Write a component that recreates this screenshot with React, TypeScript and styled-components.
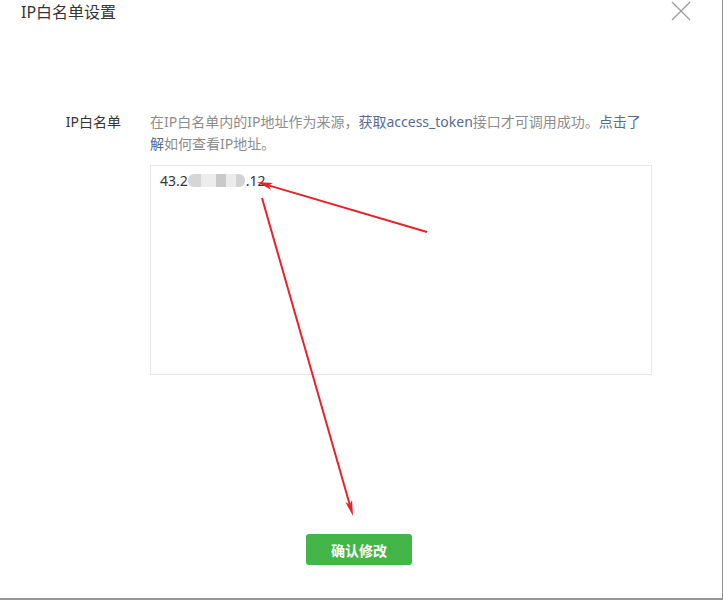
import React from 'react';
import styled, { createGlobalStyle } from 'styled-components';

const GlobalStyle = createGlobalStyle`
  html, body {
    margin: 0;
    padding: 0;
    background: #fff;
  }
  body {
    font-family: "Noto Sans", "Noto Sans CJK SC", sans-serif;
  }
`;

const Dialog = styled.div`
  position: relative;
  box-sizing: border-box;
  width: 723px;
  height: 600px;
  background: #fff;
  border-right: 1px solid #8f8f8f;
  border-bottom: 2px solid #959595;
  display: flex;
  flex-direction: column;
`;

const Header = styled.div`
  display: flex;
  align-items: center;
  justify-content: space-between;
  height: 24px;
  padding: 0 31px 0 21px;
`;

const Title = styled.h3`
  margin: 0;
  font-size: 16px;
  font-weight: normal;
  line-height: 24px;
  color: #353535;
`;

const CloseButton = styled.button`
  border: 0;
  background: none;
  padding: 0;
  width: 20px;
  height: 20px;
  margin-top: -2px;
  cursor: pointer;
  display: flex;
`;

const Body = styled.div`
  padding-top: 87px;
`;

const FormRow = styled.div`
  display: flex;
  align-items: flex-start;
`;

const Label = styled.label`
  width: 121px;
  margin-right: 29px;
  text-align: right;
  font-size: 14px;
  line-height: 22px;
  color: #353535;
  flex-shrink: 0;
`;

const Field = styled.div`
  width: 502px;
`;

const Hint = styled.p`
  margin: 0;
  font-size: 14px;
  line-height: 22px;
  color: #8d8d8d;
  white-space: nowrap;
`;

const Link = styled.a`
  color: #576b95;
  text-decoration: none;
`;

const IpBox = styled.div`
  box-sizing: border-box;
  margin-top: 10px;
  width: 502px;
  height: 210px;
  border: 1px solid #e7e7e7;
  padding: 5px 9px;
  font-size: 14px;
  line-height: 20px;
  color: #353535;
`;

// blurred part of the address
const Mosaic = styled.span`
  display: inline-flex;
  vertical-align: -1px;
  height: 13px;
  margin: 0 1px 0 0;
  filter: blur(0.6px);
`;

const Tile = styled.span<{ $w: number; $c: string; $radius?: string }>`
  display: inline-block;
  width: ${p => p.$w}px;
  height: 13px;
  background: ${p => p.$c};
  border-radius: ${p => p.$radius || '0'};
`;

const Footer = styled.div`
  display: flex;
  justify-content: center;
  padding-right: 4px;
  margin-top: 159px;
`;

const PrimaryButton = styled.button`
  width: 106px;
  height: 31px;
  border: 0;
  border-radius: 3px;
  background: #44b549;
  color: #fff;
  font-family: "Noto Sans CJK SC", sans-serif;
  font-size: 14px;
  font-weight: bold;
  cursor: pointer;
`;

const Annotations = styled.svg`
  position: absolute;
  left: 0;
  top: 0;
  pointer-events: none;
`;

const Arrow = ({ x1, y1, x2, y2 }: { x1: number; y1: number; x2: number; y2: number }) => {
  const angle = Math.atan2(y2 - y1, x2 - x1);
  const len = 16;
  const spread = 0.22;
  const ax = x2 - len * Math.cos(angle - spread);
  const ay = y2 - len * Math.sin(angle - spread);
  const bx = x2 - len * Math.cos(angle + spread);
  const by = y2 - len * Math.sin(angle + spread);
  const mx = x2 - (len - 4) * Math.cos(angle);
  const my = y2 - (len - 4) * Math.sin(angle);
  return (
    <g>
      <line x1={x1} y1={y1} x2={mx} y2={my} stroke="#e8222a" strokeWidth={2} />
      <polygon points={`${x2},${y2} ${ax},${ay} ${mx},${my} ${bx},${by}`} fill="#e8222a" />
    </g>
  );
};

export default function App() {
  return (
    <>
      <GlobalStyle />
      <Dialog>
        <Header>
          <Title>IP白名单设置</Title>
          <CloseButton aria-label="关闭">
            <svg width="20" height="20" viewBox="0 0 20 20">
              <path d="M1 1L19 19M19 1L1 19" stroke="#9a9a9a" strokeWidth="1.2" fill="none" />
            </svg>
          </CloseButton>
        </Header>
        <Body>
          <FormRow>
            <Label>IP白名单</Label>
            <Field>
              <Hint>
                在IP白名单内的IP地址作为来源，<Link href="#">获取access_token</Link>接口才可调用成功。<Link href="#">点击了</Link>
                <br />
                <Link href="#">解</Link>如何查看IP地址。
              </Hint>
              <IpBox>
                43.2
                <Mosaic>
                  <Tile $w={13} $c="#d6d6d6" $radius="6px 0 0 6px" />
                  <Tile $w={15} $c="#ededed" />
                  <Tile $w={10} $c="#c9c9c9" />
                  <Tile $w={10} $c="#ececec" />
                  <Tile $w={9} $c="#d2d2d2" $radius="0 6px 6px 0" />
                </Mosaic>
                .12
              </IpBox>
            </Field>
          </FormRow>
        </Body>
        <Footer>
          <PrimaryButton>确认修改</PrimaryButton>
        </Footer>
        <Annotations width="723" height="600" viewBox="0 0 723 600">
          <Arrow x1={427} y1={232} x2={257} y2={182} />
          <Arrow x1={262} y1={198} x2={353} y2={516} />
        </Annotations>
      </Dialog>
    </>
  );
}
